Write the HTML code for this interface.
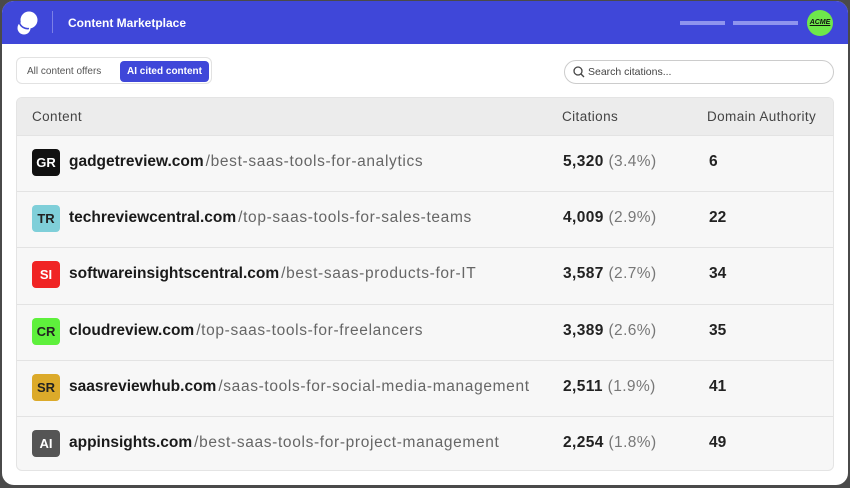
<!DOCTYPE html>
<html><head><style>
*{box-sizing:border-box;margin:0;padding:0}
body{width:850px;height:488px;background:#4a4a4a;font-family:"Liberation Sans",sans-serif;overflow:hidden;position:relative}
.panel{position:absolute;left:2px;top:1px;width:846px;height:484px;background:#fff;border-radius:12px;overflow:hidden}
.hdr{position:absolute;left:0;top:0;width:846px;height:43px;background:#3f47d9}
.title{position:absolute;left:66px;top:15px;color:#fff;font-size:12px;font-weight:bold}
.sep{position:absolute;left:50px;top:10px;width:1px;height:22px;background:#7b80e6}
.bar{position:absolute;top:20px;height:4px;background:#8f94ee}
.avatar{position:absolute;left:805px;top:9px;width:26px;height:26px;border-radius:50%;background:#6ee84b;font-size:7px;font-weight:bold;font-style:italic;color:#111;text-align:center;line-height:26px;text-decoration:underline}
.tabs{position:absolute;left:14px;top:56px;width:196px;height:27px;border:1px solid #e2e2e2;border-radius:6px;background:#fff}
.t1{position:absolute;left:10px;top:8px;font-size:10px;color:#555}
.t2{position:absolute;left:103px;top:3px;width:89px;height:21px;background:#3f47d9;border-radius:4px;color:#fff;font-size:10px;font-weight:bold;text-align:center;line-height:21px}
.search{position:absolute;left:562px;top:59px;width:270px;height:24px;border:1px solid #ccc;border-radius:12px}
.search span{position:absolute;left:23px;top:5px;font-size:10.5px;color:#444}
.table{position:absolute;left:14px;top:96px;width:818px;height:374px;background:#f7f7f7;border:1px solid #e4e4e4;border-radius:6px;overflow:hidden}
.th{height:37px;background:#ececec;position:relative;font-size:13.5px;color:#444;letter-spacing:0.4px}
.th span{position:absolute;top:11px}
.row{height:56.2px;border-top:1px solid #e3e3e3;position:relative}
.ic{position:absolute;left:15px;top:13px;width:28px;height:27px;border-radius:4px;color:#fff;font-size:13px;font-weight:bold;text-align:center;line-height:27px}
.u{position:absolute;left:52px;top:17px;font-size:15.5px;color:#222;white-space:nowrap}
.u b{font-weight:bold;color:#1a1a1a}
.u i{font-style:normal;color:#666;letter-spacing:0.65px;margin-left:2px}
.c{position:absolute;left:546px;top:17px;font-size:15.5px;color:#222;font-weight:bold;letter-spacing:0.4px}
.c i{font-style:normal;font-weight:normal;color:#777}
.d{position:absolute;left:692px;top:17px;font-size:15.5px;font-weight:bold;color:#222}
</style></head><body>
<div class="panel">
<div class="hdr">
<svg style="position:absolute;left:14px;top:9px" width="24" height="26" viewBox="0 0 24 26"><circle cx="13" cy="10" r="8.5" fill="#fff"/><circle cx="8" cy="18" r="6.5" fill="#fff"/><path d="M3.5 13 A8.5 8.5 0 0 0 13 18.5" stroke="#3f47d9" stroke-width="1.6" fill="none"/></svg>
<div class="sep"></div>
<div class="title">Content Marketplace</div>
<div class="bar" style="left:678px;width:45px"></div>
<div class="bar" style="left:731px;width:65px"></div>
<div class="avatar">ACME</div>
</div>
<div class="tabs"><div class="t1">All content offers</div><div class="t2">AI cited content</div></div>
<div class="search"><svg style="position:absolute;left:8px;top:5px" width="12" height="12" viewBox="0 0 12 12"><circle cx="5" cy="5" r="4" stroke="#444" stroke-width="1.3" fill="none"/><path d="M8 8l3 3" stroke="#444" stroke-width="1.3"/></svg><span>Search citations...</span></div>
<div class="table">
<div class="th"><span style="left:15px">Content</span><span style="left:545px">Citations</span><span style="left:690px">Domain Authority</span></div>
<div class="row"><div class="ic" style="background:#111">GR</div><div class="u"><b>gadgetreview.com</b><i>/best-saas-tools-for-analytics</i></div><div class="c">5,320 <i>(3.4%)</i></div><div class="d">6</div></div>
<div class="row"><div class="ic" style="background:#7fcfd9;color:#222">TR</div><div class="u"><b>techreviewcentral.com</b><i>/top-saas-tools-for-sales-teams</i></div><div class="c">4,009 <i>(2.9%)</i></div><div class="d">22</div></div>
<div class="row"><div class="ic" style="background:#f02424">SI</div><div class="u"><b>softwareinsightscentral.com</b><i>/best-saas-products-for-IT</i></div><div class="c">3,587 <i>(2.7%)</i></div><div class="d">34</div></div>
<div class="row"><div class="ic" style="background:#5ef03c;color:#222">CR</div><div class="u"><b>cloudreview.com</b><i>/top-saas-tools-for-freelancers</i></div><div class="c">3,389 <i>(2.6%)</i></div><div class="d">35</div></div>
<div class="row"><div class="ic" style="background:#dcaa2a;color:#222">SR</div><div class="u"><b>saasreviewhub.com</b><i>/saas-tools-for-social-media-management</i></div><div class="c">2,511 <i>(1.9%)</i></div><div class="d">41</div></div>
<div class="row"><div class="ic" style="background:#555">AI</div><div class="u"><b>appinsights.com</b><i>/best-saas-tools-for-project-management</i></div><div class="c">2,254 <i>(1.8%)</i></div><div class="d">49</div></div>
</div>
</div>
</body></html>
